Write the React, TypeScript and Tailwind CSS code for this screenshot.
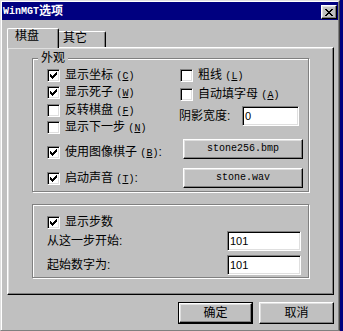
import React from "react";

const face = "font-['Liberation_Sans','Noto_Sans_CJK_SC',sans-serif]";
const mono = "font-['Liberation_Mono','Noto_Sans_CJK_SC',monospace]";
const raised =
  "border border-t-white border-l-white border-r-black border-b-black shadow-[inset_-1px_-1px_0_#808080,inset_1px_1px_0_#dfdfdf]";
const sunken =
  "border border-t-[#808080] border-l-[#808080] border-r-white border-b-white shadow-[inset_1px_1px_0_#000,inset_-1px_-1px_0_#dfdfdf]";
const etched = "border border-[#808080] shadow-[inset_1px_1px_0_#fff,1px_1px_0_#fff]";

function Key({ k }: { k: string }) {
  return (
    <span className={`${mono} text-[10px]`}>
      (<span className="underline">{k}</span>)
    </span>
  );
}

function Check({ on }: { on?: boolean }) {
  return (
    <span className={`${sunken} w-[13px] h-[13px] bg-white shrink-0 flex items-center justify-center`}>
      {on && (
        <svg width="7" height="7" viewBox="0 0 7 7" shapeRendering="crispEdges">
          <path
            d="M0 2h1v3H0zM1 3h1v3H1zM2 4h1v3H2zM3 3h1v3H3zM4 2h1v3H4zM5 1h1v3H5zM6 0h1v3H6z"
            fill="#000"
          />
        </svg>
      )}
    </span>
  );
}

function CheckRow({
  on,
  label,
  k,
  colon,
  className = "",
}: {
  on?: boolean;
  label: string;
  k?: string;
  colon?: boolean;
  className?: string;
}) {
  return (
    <div className={`flex items-center h-[13px] ${className}`}>
      <Check on={on} />
      <span className="ml-[5px] text-[12px] leading-[13px] whitespace-nowrap">
        {label}
        {k && (
          <>
            {" "}
            <Key k={k} />
          </>
        )}
        {colon && ":"}
      </span>
    </div>
  );
}

function FileButton({ name }: { name: string }) {
  return (
    <div className={`${raised} w-[120px] h-[20px] bg-[#c0c0c0] flex items-center justify-center`}>
      <span className={`${mono} text-[10px] leading-[12px]`}>{name}</span>
    </div>
  );
}

function Field({ value, w }: { value: string; w: string }) {
  return (
    <div className={`${sunken} ${w} h-[20px] bg-white flex items-center pl-[2px]`}>
      <span className="text-[11px] leading-[12px]">{value}</span>
    </div>
  );
}

export default function App() {
  return (
    <div className={`flex w-[343px] h-[331px] ${face} text-black`}>
      <div className="w-[340px] h-[331px] bg-[#c0c0c0] border-l border-t border-[#dfdfdf] border-r border-r-[#404040] border-b border-b-[#808080]">
        <div className="h-full border-l border-t border-white border-r border-r-[#808080] flex flex-col">
          {/* title bar */}
          <div className="h-[18px] shrink-0 bg-[#000080] flex items-start justify-between pl-[1px] pr-[1px]">
            <div className="h-[18px] flex items-center text-white font-bold">
              <span className={`${mono} text-[10px]`}>WinMGT</span>
              <span className="text-[12px] leading-[13px]">选项</span>
            </div>
            <div className={`${raised} mt-[3px] w-[16px] h-[14px] bg-[#c0c0c0] flex items-center justify-center`}>
              <svg width="8" height="7" viewBox="0 0 8 7" shapeRendering="crispEdges">
                <path
                  d="M0 0h2v1H0zM6 0h2v1H6zM1 1h2v1H1zM5 1h2v1H5zM2 2h4v1H2zM3 3h2v1H3zM2 4h4v1H2zM1 5h2v1H1zM5 5h2v1H5zM0 6h2v1H0zM6 6h2v1H6z"
                  fill="#000"
                />
              </svg>
            </div>
          </div>

          {/* tabs */}
          <div className="mt-[8px] ml-[5px] h-[19px] flex items-end">
            <div className="relative z-10 -mb-px w-[52px] h-[20px] bg-[#c0c0c0] border-l border-t border-white border-r border-r-black rounded-t-[2px] shadow-[inset_-1px_0_0_#808080] pl-[7px] pt-[1px] text-[12px] leading-[13px]">
              棋盘
            </div>
            <div className="w-[47px] h-[16px] border-t border-white border-r border-r-black rounded-tr-[2px] shadow-[inset_-1px_0_0_#808080] pl-[4px] text-[12px] leading-[13px]">
              其它
            </div>
          </div>

          {/* panel */}
          <div className="ml-[5px] w-[327px] h-[248px] border-l border-t border-white border-r border-b border-r-black border-b-black shadow-[inset_-1px_-1px_0_#808080,inset_1px_1px_0_#dfdfdf] pl-[24px] pt-[10px]">
            {/* 外观 */}
            <div className={`relative w-[277px] h-[134px] ${etched} pl-[14px] pt-[10px]`}>
              <span className="absolute left-[5px] top-[-7px] px-[3px] bg-[#c0c0c0] text-[12px] leading-[13px]">
                外观
              </span>
              <div className="flex">
                <div className="w-[132px] flex flex-col">
                  <CheckRow on label="显示坐标" k="C" />
                  <CheckRow on label="显示死子" k="W" className="mt-[4px]" />
                  <CheckRow label="反转棋盘" k="F" className="mt-[5px]" />
                  <CheckRow label="显示下一步" k="N" className="mt-[4px]" />
                </div>
                <div className="flex flex-col">
                  <CheckRow label="粗线" k="L" className="ml-[1px]" />
                  <CheckRow label="自动填字母" k="A" className="ml-[1px] mt-[6px]" />
                  <div className="mt-[5px] w-[120px] h-[20px] flex items-center justify-between">
                    <span className="text-[12px] leading-[13px]">阴影宽度:</span>
                    <Field value="0" w="w-[57px]" />
                  </div>
                </div>
              </div>
              <div className="mt-[5px] flex">
                <div className="w-[136px] pt-[7px]">
                  <CheckRow on label="使用图像棋子" k="B" colon />
                </div>
                <FileButton name="stone256.bmp" />
              </div>
              <div className="mt-[9px] flex">
                <div className="w-[136px] pt-[4px]">
                  <CheckRow on label="启动声音" k="T" colon />
                </div>
                <FileButton name="stone.wav" />
              </div>
            </div>

            {/* 步数 */}
            <div className={`mt-[12px] w-[277px] h-[74px] ${etched} pl-[14px] pt-[11px]`}>
              <CheckRow on label="显示步数" />
              <div className="mt-[2px] h-[20px] flex items-center">
                <span className="w-[180px] text-[12px] leading-[13px]">从这一步开始:</span>
                <Field value="101" w="w-[74px]" />
              </div>
              <div className="mt-[4px] h-[20px] flex items-center">
                <span className="w-[180px] text-[12px] leading-[13px]">起始数字为:</span>
                <Field value="101" w="w-[74px]" />
              </div>
            </div>
          </div>

          {/* dialog buttons */}
          <div className="mt-[7px] pr-[4px] flex justify-end gap-[6px]">
            <div className="w-[75px] h-[22px] border border-black">
              <div className={`${raised} h-full bg-[#c0c0c0] flex items-center justify-center`}>
                <span className="text-[12px] leading-[13px]">确定</span>
              </div>
            </div>
            <div className={`${raised} w-[75px] h-[22px] bg-[#c0c0c0] flex items-center justify-center`}>
              <span className="text-[12px] leading-[13px]">取消</span>
            </div>
          </div>
        </div>
      </div>
      <div className="w-[3px] h-[331px] bg-[#000080]" />
    </div>
  );
}
